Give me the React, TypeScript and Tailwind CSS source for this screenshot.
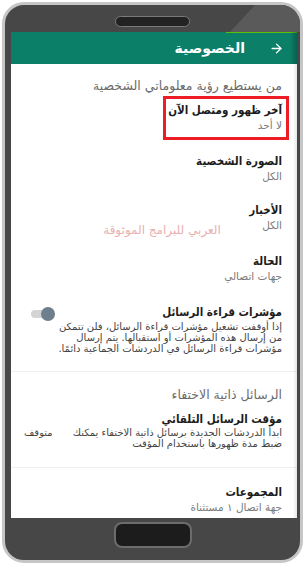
import { ArrowRight } from 'lucide-react';

const font = { fontFamily: '"DejaVu Sans", sans-serif' };

function Row({ title, sub, className = '' }: { title: string; sub: string; className?: string }) {
  return (
    <div className={`pr-[15px] ${className}`}>
      <div className="text-[11.5px] leading-[16px] font-bold font-stretch-condensed text-[#1c1c1c]">{title}</div>
      <div className="text-[10.5px] leading-[14px] text-[#7b7b7b]">{sub}</div>
    </div>
  );
}

export default function App() {
  return (
    <div className="w-[305px] h-[565px] bg-white p-[2px]" style={font}>
      <div className="relative h-[561px] rounded-[22px] border-[3px] border-[#c6c6c6] bg-[#474747] flex flex-col items-center">
        {/* glass reflection */}
        <div className="absolute inset-0 rounded-[19px] bg-[#5a5a5a] [clip-path:polygon(250px_0,100%_0,100%_27px,225px_27px)]" />

        {/* speaker */}
        <div className="relative mt-[11px] w-[75px] h-[11px] rounded-full bg-[#222] border border-[#7a7a7a]" />

        {/* screen */}
        <div dir="rtl" className="relative self-start ml-[6px] mt-[5px] w-[286px] h-[486px] bg-white overflow-hidden">
          <div className="relative h-[32px] bg-[#0b7f68] flex items-center pr-[13px] gap-[24px]">
            <div className="absolute top-0 right-0 w-[71px] h-px bg-[#5cbc0a]" />
            <div className="absolute top-0 right-0 h-full w-[7px] bg-gradient-to-r from-transparent to-black/25" />
            <ArrowRight className="w-[15px] h-[15px] text-white" strokeWidth={2.2} />
            <span className="text-[14px] font-bold text-white leading-none">الخصوصية</span>
          </div>

          <div className="flex flex-col">
            <div className="mt-[15px] pr-[15px] text-[12.5px] leading-[14px] text-[#6b6b6b]">
              من يستطيع رؤية معلوماتي الشخصية
            </div>
            <Row className="mt-[9px]" title="آخر ظهور ومتصل الآن" sub="لا أحد" />
            <Row className="mt-[21px]" title="الصورة الشخصية" sub="الكل" />
            <Row className="mt-[19px]" title="الأخبار" sub="الكل" />
            <Row className="mt-[21px]" title="الحالة" sub="جهات اتصالي" />

            <div className="mt-[21px] flex justify-between pr-[15px] pl-[20px]">
              <div>
                <div className="text-[11.5px] leading-[16px] font-bold font-stretch-condensed text-[#1c1c1c]">مؤشرات قراءة الرسائل</div>
                <div className="mt-[1px] text-[10px] leading-[11px] text-[#444] whitespace-nowrap">
                  <div>إذا أوقفت تشغيل مؤشرات قراءة الرسائل، فلن تتمكن</div>
                  <div>من إرسال هذه المؤشرات أو استقبالها. يتم إرسال</div>
                  <div>مؤشرات قراءة الرسائل في الدردشات الجماعية دائمًا.</div>
                </div>
              </div>
              <div className="relative self-start mt-[3px] w-[24px] h-[14px] shrink-0">
                <div className="absolute left-0 top-[3px] w-[22px] h-[8px] rounded-full bg-[#d4d4d4]" />
                <div className="absolute right-0 top-0 w-[14px] h-[14px] rounded-full bg-[#6d7e8c]" />
              </div>
            </div>

            <div className="mt-[17px] h-px bg-[#eeeeee]" />

            <div className="mt-[16px] pr-[15px] text-[12.5px] leading-[14px] text-[#6b6b6b]">
              الرسائل ذاتية الاختفاء
            </div>

            <div className="mt-[9px] flex justify-between pr-[15px] pl-[13px]">
              <div>
                <div className="text-[11.5px] leading-[16px] font-bold font-stretch-condensed text-[#1c1c1c]">مؤقت الرسائل التلقائي</div>
                <div className="text-[10px] leading-[11px] text-[#444] whitespace-nowrap">
                  <div>ابدأ الدردشات الجديدة برسائل ذاتية الاختفاء يمكنك</div>
                  <div>ضبط مدة ظهورها باستخدام المؤقت</div>
                </div>
              </div>
              <div className="self-start shrink-0 mt-[16px] text-[10px] leading-[11px] text-[#444]">متوقف</div>
            </div>

            <div className="mt-[18px] h-px bg-[#eeeeee]" />

            <div className="mt-[17px] pr-[15px]">
              <div className="text-[11.5px] leading-[15px] font-bold font-stretch-condensed text-[#1c1c1c]">المجموعات</div>
              <div className="text-[10.5px] leading-[14px] text-[#7b7b7b]">جهة اتصال ١ مستثناة</div>
            </div>
          </div>

          {/* watermark */}
          <div className="absolute left-[90px] top-[190px] w-[122px] text-center text-[12px] leading-[16px] text-[#eab0b0] whitespace-nowrap">
            العربي للبرامج الموثوقة
          </div>

          {/* highlight box */}
          <div className="absolute left-[152px] top-[64px] w-[126px] h-[44px] border-[3px] border-[#ee1c24]" />

          <div className="absolute top-[32px] bottom-0 right-0 w-[4px] bg-gradient-to-r from-transparent to-black/10" />
        </div>

        {/* home button */}
        <div className="mt-[4px] w-[78px] h-[26px] rounded-[8px] bg-[#1c1c1c] border-2 border-[#6c6c6c]" />
      </div>
    </div>
  );
}
